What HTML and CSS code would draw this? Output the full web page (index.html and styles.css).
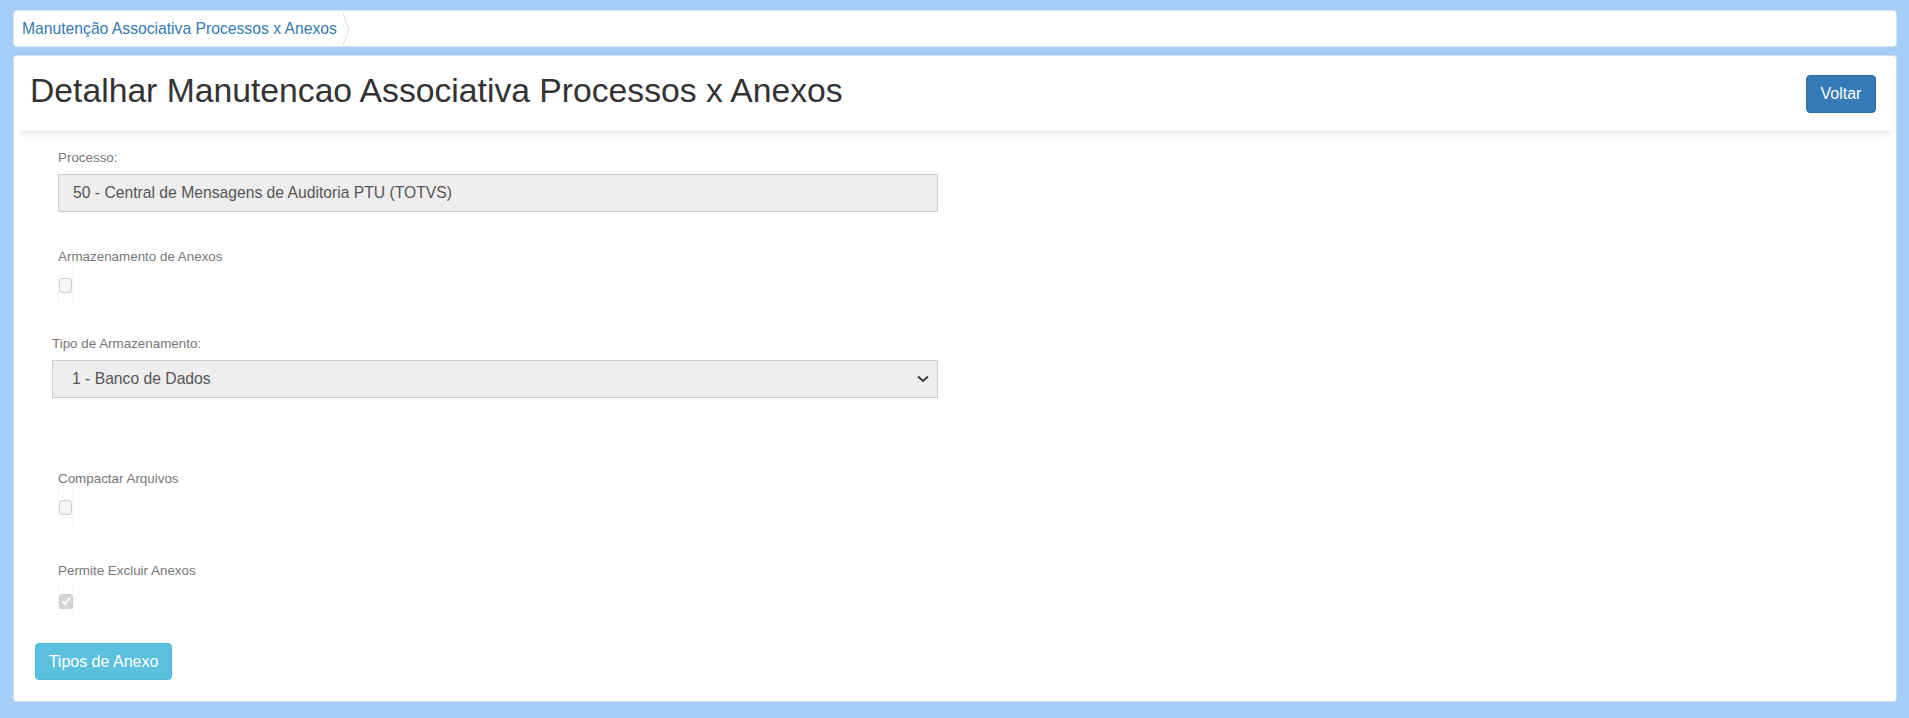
FILE: index.html
```html
<!DOCTYPE html>
<html lang="pt-BR">
<head>
<meta charset="utf-8">
<title>Detalhar Manutencao Associativa Processos x Anexos</title>
<link rel="stylesheet" href="styles.css">
</head>
<body>
<nav class="breadcrumb">
  <a class="crumb" href="#">Manutenção Associativa Processos x Anexos</a>
  <svg class="crumb-sep" width="8" height="32" viewBox="0 0 8 32"><polyline points="1,0 7,16 1,32" fill="none" stroke="#dcdcdc" stroke-width="1"/></svg>
</nav>
<main class="panel">
  <header class="page-header">
    <h1 class="title">Detalhar Manutencao Associativa Processos x Anexos</h1>
    <button class="btn btn-primary">Voltar</button>
  </header>
  <section class="form">
    <div class="group group-processo">
      <label class="label">Processo:</label>
      <div class="field field-input">50 - Central de Mensagens de Auditoria PTU (TOTVS)</div>
    </div>
    <div class="group group-armaz">
      <label class="label">Armazenamento de Anexos</label>
      <div class="check-wrap"><span class="check"></span></div>
    </div>
    <div class="group group-tipo">
      <label class="label">Tipo de Armazenamento:</label>
      <div class="field field-select">
        <span>1 - Banco de Dados</span>
        <svg class="caret" width="12" height="8" viewBox="0 0 12 8"><polyline points="1,1.5 6,6 11,1.5" fill="none" stroke="#333" stroke-width="1.8"/></svg>
      </div>
    </div>
    <div class="group group-compactar">
      <label class="label">Compactar Arquivos</label>
      <div class="check-wrap"><span class="check"></span></div>
    </div>
    <div class="group group-excluir">
      <label class="label">Permite Excluir Anexos</label>
      <div class="check-wrap check-wrap-tight"><span class="check checked"><svg width="12" height="12" viewBox="0 0 12 12"><polyline points="2.5,6.5 5,9 9.8,3" fill="none" stroke="#fff" stroke-width="1.8"/></svg></span></div>
    </div>
    <button class="btn btn-info">Tipos de Anexo</button>
  </section>
</main>
</body>
</html>
```

FILE: styles.css
```css
* { box-sizing: border-box; }
html, body { margin: 0; }
body {
  background: #a4cdf8;
  padding: 10px 12px 16px 13px;
  font-family: "Liberation Sans", Arial, sans-serif;
  height: 718px;
}
.breadcrumb {
  height: 37px;
  background: #fff;
  border: 1px solid #dde6ef;
  border-radius: 4px;
  display: flex;
  align-items: center;
  padding-left: 8px;
}
.crumb {
  color: #337ab7;
  font-size: 15.7px;
  text-decoration: none;
}
.crumb-sep { margin-left: 5px; display: block; }
.panel {
  margin-top: 8px;
  background: #fff;
  border: 1px solid #d8dfe6;
  border-radius: 4px;
  height: 647px;
}
.page-header {
  margin: 0 3px;
  padding: 14px 17px 18px 13px;
  display: flex;
  justify-content: space-between;
  align-items: flex-start;
  box-shadow: 0 5px 7px -3px rgba(0,0,0,0.10);
}
.title {
  margin: 0;
  font-weight: 400;
  font-size: 33.7px;
  line-height: 40px;
  color: #333;
}
.btn {
  font-family: "Liberation Sans", Arial, sans-serif;
  font-size: 16px;
  color: #fff;
  border-radius: 4px;
  border: 1px solid transparent;
  padding: 0 12px;
}
.btn-primary {
  margin-top: 5px;
  width: 70px;
  height: 38px;
  background: #337ab7;
  border-color: #2e6da4;
  padding: 0;
}
.btn-info {
  margin: 23px 0 0 21px;
  width: 137px;
  height: 37px;
  background: #5bc0de;
  border-color: #46b8da;
  padding: 0;
}
.form { display: flex; flex-direction: column; align-items: flex-start; }
.group { display: flex; flex-direction: column; align-items: flex-start; }
.label {
  font-size: 13.4px;
  line-height: 18px;
  color: #777;
}
.group-processo { margin: 18px 0 0 44px; }
.group-armaz { margin: 36px 0 0 44px; }
.group-tipo { margin: 31px 0 0 38px; }
.group-compactar { margin: 72px 0 0 44px; }
.group-excluir { margin: 36px 0 0 44px; }
.field {
  background: #eee;
  border: 1px solid #ccc;
  color: #555;
  font-size: 15.7px;
  display: flex;
  align-items: center;
}
.field-input {
  margin-top: 7px;
  width: 880px;
  height: 38px;
  padding-left: 14px;
}
.field-select {
  margin-top: 7px;
  width: 886px;
  height: 38px;
  padding: 0 8px 0 19px;
  justify-content: space-between;
}
.caret { display: block; }
.check-wrap {
  width: 15px;
  height: 38px;
  border-left: 1px solid #f7f7f7;
  border-right: 1px solid #f7f7f7;
  display: flex;
  align-items: center;
  justify-content: center;
}
.check-wrap-tight { margin-top: 2px; }
.check {
  width: 15px;
  height: 15px;
  border: 1px solid #cfcfcf;
  border-radius: 3px;
  background: #f4f4f4;
  display: flex;
  align-items: center;
  justify-content: center;
}
.check.checked {
  background: #d4d4d4;
  border-color: #cdcdcd;
}
.check svg { display: block; }
```
